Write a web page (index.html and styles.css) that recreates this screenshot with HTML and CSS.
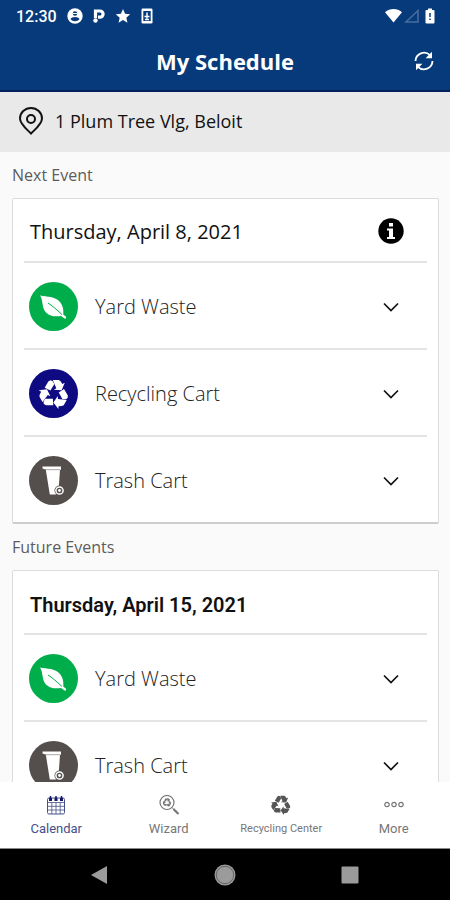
FILE: index.html
```html
<!DOCTYPE html>
<html lang="en">
<head>
    <meta charset="UTF-8">
    <meta name="viewport" content="width=device-width, initial-scale=1.0">
    <title>My Schedule</title>
    <link rel="stylesheet" href="styles.css">
</head>
<body>

    <!-- Shared icons -->
    <svg class="sprite" aria-hidden="true">
        <symbol id="leaf" viewBox="0 0 49 49">
            <path fill="#fff" d="M11 13.500c7 1.500 15 .5 20 6.500 3.500 4.500 3.500 8.500 3.300 12.500l3 2.500-1 2-4.300-3c-5 .8-12.200.8-16.200-5C12.800 23.500 14 18 11 13.500z"/>
            <path fill="none" stroke="#00ad4b" d="M19 21c4 2.500 8 6 14 11.500"/>
        </symbol>
        <symbol id="recycle" viewBox="-15 -15 30 30">
            <g id="arm" fill="currentColor">
                <path d="M-9.300-6.200l3.600-6.300 2-1.300 2.200.8 1.900 3-4 6.600z"/>
                <path d="M-1.200-14h6l1.800 1.200 1.700 2.800 2.500-1.300-3.200 7.600-7.800-.6 2.500-1.500z"/>
            </g>
            <use href="#arm" transform="rotate(120)"/>
            <use href="#arm" transform="rotate(240)"/>
        </symbol>
        <symbol id="bin" viewBox="0 0 49 49">
            <path fill="#fff" d="M13.500 10.500H32v3.200h-1L29.800 31 27 38.500h-6.200l-4-24.800-3.300-1.200z"/>
            <path fill="none" stroke="#544e4d" stroke-width=".5" d="M16 13.700h15"/>
            <circle cx="30.500" cy="34.500" r="5" fill="#544e4d"/>
            <circle cx="30.500" cy="34.500" r="3.600" fill="#544e4d" stroke="#fff" stroke-width="1.500"/>
            <circle cx="30.500" cy="34.500" r="1.400" fill="#fff"/>
        </symbol>
        <symbol id="chevron" viewBox="0 0 16 10">
            <path fill="none" stroke="#111" stroke-width="1.700" d="M1 1.500l7 7 7-7"/>
        </symbol>
    </svg>

    <div class="app">
        <header class="top">
            <div class="status">
                <span class="clock">12:30</span>
                <svg class="status-icon" viewBox="0 0 16 16"><circle cx="8" cy="8" r="7.700" fill="#fff"/><circle cx="8" cy="5.500" r="2.300" fill="#063a7a"/><path fill="#063a7a" d="M3.500 11c1-2.800 8-2.800 9 0-2 3-7 3-9 0z"/><path stroke="#fff" d="M5.500 5.500h5"/></svg>
                <svg class="status-icon" viewBox="0 0 16 16"><path fill="none" stroke="#fff" stroke-width="3.200" d="M4.500 10V3h4.500a3 3 0 0 1 0 6.200H7"/><circle cx="4.500" cy="12.500" r="2.200" fill="#fff"/></svg>
                <svg class="status-icon" viewBox="0 0 16 16"><path fill="#fff" d="M8 1l2.100 4.800 5.100.5-3.900 3.400 1.200 5.100L8 12.100l-4.500 2.700 1.200-5.100L.8 6.300l5.100-.5z"/></svg>
                <svg class="status-icon" viewBox="0 0 16 16"><rect x="2.500" y=".5" width="11" height="15" rx="1.300" fill="#fff"/><path fill="#063a7a" d="M4.300 3h7.400v10H4.300z"/><path stroke="#fff" stroke-width="1.500" d="M8 4.500v6M5.500 8.500h5M6 11.500h4"/></svg>
                <span class="spacer"></span>
                <svg class="signal" viewBox="0 0 50 16">
                    <path fill="#fff" d="M0 4.200C5 0 12 0 17 4.200L8.500 14.500z"/>
                    <path fill="none" stroke="#486e9d" stroke-width="1.500" d="M21 14L33 2.500V14z"/>
                    <path fill="#fff" d="M43 .5h4V2h1.500q1 0 1 1v11.500q0 1-1 1h-7q-1 0-1-1V3q0-1 1-1H43z"/>
                    <path stroke="#063a7a" stroke-width="1.500" d="M45 5v4M45 10.500V12"/>
                </svg>
            </div>
            <div class="title-bar">
                <h1>My Schedule</h1>
                <button class="refresh" aria-label="Refresh">
                    <svg viewBox="0 0 20 20">
                        <path fill="none" stroke="#fff" stroke-width="1.800" d="M1.500 10A8.500 8.500 0 0 1 16 4.200M18.500 10A8.500 8.500 0 0 1 4 15.800"/>
                        <path fill="#fff" d="M18 .8v6.400h-6.400zM2 19.200v-6.400h6.400z"/>
                    </svg>
                </button>
            </div>
        </header>

        <div class="address">
            <svg viewBox="0 0 24 28"><path fill="none" stroke="#111" stroke-width="2" d="M12 26.500C7 21.500 1 17 1 11.500a11 10.500 0 0 1 22 0C23 17 17 21.500 12 26.500z"/><circle cx="12" cy="12" r="4" fill="none" stroke="#111" stroke-width="2"/></svg>
            <span>1 Plum Tree Vlg, Beloit</span>
        </div>

        <main class="events">
            <h2>Next Event</h2>
            <section class="card">
                <div class="date">
                    <h3>Thursday, April 8, 2021</h3>
                    <button class="info" aria-label="Information">
                        <svg viewBox="0 0 26 26"><circle cx="13" cy="13" r="12.700"/><path fill="#fff" d="M11 5h4v3.500h-4zM9 10.500h6V19h2v2H9v-2h2v-6.500H9z"/></svg>
                    </button>
                </div>
                <button class="pickup">
                    <span class="badge yard"><svg class="full"><use href="#leaf"/></svg></span>
                    <span class="name">Yard Waste</span>
                    <svg class="chevron"><use href="#chevron"/></svg>
                </button>
                <button class="pickup">
                    <span class="badge recycling"><svg class="small"><use href="#recycle"/></svg></span>
                    <span class="name">Recycling Cart</span>
                    <svg class="chevron"><use href="#chevron"/></svg>
                </button>
                <button class="pickup">
                    <span class="badge trash"><svg class="full"><use href="#bin"/></svg></span>
                    <span class="name">Trash Cart</span>
                    <svg class="chevron"><use href="#chevron"/></svg>
                </button>
            </section>

            <h2>Future Events</h2>
            <section class="card">
                <div class="date future">
                    <h3>Thursday, April 15, 2021</h3>
                </div>
                <button class="pickup">
                    <span class="badge yard"><svg class="full"><use href="#leaf"/></svg></span>
                    <span class="name">Yard Waste</span>
                    <svg class="chevron"><use href="#chevron"/></svg>
                </button>
                <button class="pickup">
                    <span class="badge trash"><svg class="full"><use href="#bin"/></svg></span>
                    <span class="name">Trash Cart</span>
                    <svg class="chevron"><use href="#chevron"/></svg>
                </button>
            </section>
        </main>

        <nav class="tabs">
            <a href="#calendar" class="active">
                <svg class="tab-icon" viewBox="0 0 20 20"><rect x="1.500" y="3" width="17" height="16" rx="1.500" fill="none" stroke="currentColor"/><path stroke="currentColor" stroke-width=".8" d="M2 7.500h16M2 11.300h16M2 15h16M5.800 7.500V19M10 7.500V19M14.200 7.500V19"/><path stroke="#16166b" stroke-width="3" d="M3 4.500h14" stroke-dasharray="3 2.500"/><path stroke="#16166b" stroke-width="1.500" d="M4.500 1v3M10 1v3M15.500 1v3"/></svg>
                <span>Calendar</span>
            </a>
            <a href="#wizard">
                <svg class="tab-icon" viewBox="0 0 20 20"><circle cx="8" cy="7.500" r="7" fill="none" stroke="currentColor" stroke-width="1.200"/><use href="#recycle" x="3.500" y="3" width="9" height="9"/><path stroke="currentColor" d="M13 12.500l2 2"/><path stroke="currentColor" stroke-width="2.200" d="M14.500 14l5 5"/></svg>
                <span>Wizard</span>
            </a>
            <a href="#centers">
                <svg class="tab-icon center-icon"><use href="#recycle"/></svg>
                <span class="long">Recycling Center</span>
            </a>
            <a href="#more">
                <svg class="tab-icon" viewBox="0 0 20 20"><g fill="none" stroke="currentColor" stroke-width="1.200"><circle cx="3" cy="9.500" r="2.200"/><circle cx="10" cy="9.500" r="2.200"/><circle cx="17" cy="9.500" r="2.200"/></g></svg>
                <span>More</span>
            </a>
        </nav>

        <footer class="system">
            <button aria-label="Back"><svg viewBox="0 0 22 22"><path fill="#9b9b9b" d="M2 11L18 2v18z"/></svg></button>
            <button aria-label="Home"><svg viewBox="0 0 22 22"><circle cx="11" cy="11" r="10.500" fill="#9b9b9b"/><circle cx="11" cy="11" r="8.700" fill="none" stroke="#555" stroke-width=".8"/></svg></button>
            <button aria-label="Recent apps"><svg viewBox="0 0 22 22"><rect x="2.500" y="2.500" width="17" height="17" rx="1" fill="#9b9b9b"/></svg></button>
        </footer>
    </div>

</body>
</html>
```

FILE: styles.css
```css
:root {
    --blue: #063a7a;
    --line: #e4e4e4;
    --muted: #5c5c5c;
}

* {
    box-sizing: border-box;
}

body {
    margin: 0;
    background: #fafafa;
    color: #111;
    font-family: "Open Sans", sans-serif;
}

h1, h2, h3 {
    margin: 0;
    font-size: inherit;
    font-weight: 400;
}

button {
    padding: 0;
    border: 0;
    background: none;
    color: inherit;
    font: inherit;
    cursor: pointer;
}

svg {
    display: block;
}

.sprite {
    position: absolute;
    width: 0;
    height: 0;
}

.app {
    display: flex;
    flex-direction: column;
    height: 100vh;
}

/* Header */
.top {
    background: var(--blue);
    border-bottom: 2px solid #04205e;
    color: #fff;
}

.status {
    display: flex;
    align-items: center;
    gap: 8px;
    height: 32px;
    padding: 0 15px 0 16px;
}

.clock {
    margin-right: 2px;
    font: 500 16px Roboto, sans-serif;
}

.status-icon {
    width: 16px;
    height: 16px;
}

.spacer {
    flex: 1;
}

.signal {
    width: 50px;
    height: 16px;
}

.title-bar {
    display: grid;
    grid-template-columns: 1fr auto 1fr;
    align-items: center;
    height: 58px;
    padding: 0 16px;
}

.title-bar h1 {
    grid-column: 2;
    font-size: 22px;
    font-weight: 700;
}

.refresh {
    justify-self: end;
}

.refresh svg {
    width: 20px;
    height: 20px;
}

.address {
    display: flex;
    align-items: center;
    gap: 12px;
    height: 60px;
    padding: 0 19px 2px;
    background: #e9e9e9;
    font-size: 18px;
}

.address svg {
    width: 24px;
    height: 28px;
}

/* Event list */
.events {
    flex: 1;
    min-height: 0;
    padding: 0 11px 0 12px;
    overflow: hidden;
}

.events h2 {
    height: 46px;
    color: var(--muted);
    font-size: 16px;
    line-height: 46px;
}

.card {
    padding: 0 11px;
    background: #fff;
    border: 1px solid #dcdcdc;
    border-bottom: 2px solid #cdcdcd;
    border-radius: 2px;
}

.date {
    display: flex;
    align-items: center;
    justify-content: space-between;
    height: 62px;
    padding: 2px 23px 0 6px;
    font-size: 20px;
}

.future {
    padding-top: 6px;
    font-family: Roboto, sans-serif;
}

.future h3 {
    font-weight: 600;
}

.info svg {
    width: 26px;
    height: 26px;
}

.pickup {
    display: flex;
    align-items: center;
    width: 100%;
    height: 87px;
    padding: 2px 28px 0 5px;
    border-top: 2px solid var(--line);
    color: #222;
    font-size: 20px;
    font-weight: 300;
    text-align: left;
}

.badge {
    display: grid;
    place-items: center;
    width: 49px;
    height: 49px;
    margin-right: 17px;
    border-radius: 50%;
    color: #fff;
}

.yard { background: #00ad4b; }
.recycling { background: #0e0a82; }
.trash { background: #544e4d; }

.full {
    width: 49px;
    height: 49px;
}

.small {
    width: 30px;
    height: 30px;
}

.name {
    flex: 1;
}

.chevron {
    width: 16px;
    height: 10px;
}

/* Bottom tabs */
.tabs {
    display: grid;
    grid-template-columns: repeat(4, 1fr);
    height: 66px;
    background: #fff;
}

.tabs a {
    display: flex;
    flex-direction: column;
    align-items: center;
    gap: 5px;
    padding-top: 13px;
    color: #777;
    font: 13px/18px Roboto, sans-serif;
    text-decoration: none;
}

.tabs a.active {
    color: #44508a;
}

.tab-icon {
    width: 20px;
    height: 20px;
}

.center-icon {
    color: #555;
}

.tabs .long {
    font-size: 11px;
}

.system {
    display: flex;
    align-items: center;
    justify-content: center;
    gap: 103px;
    height: 52px;
    background: #000;
    border-top: 1px solid #888;
}

.system svg {
    width: 22px;
    height: 22px;
}
```
